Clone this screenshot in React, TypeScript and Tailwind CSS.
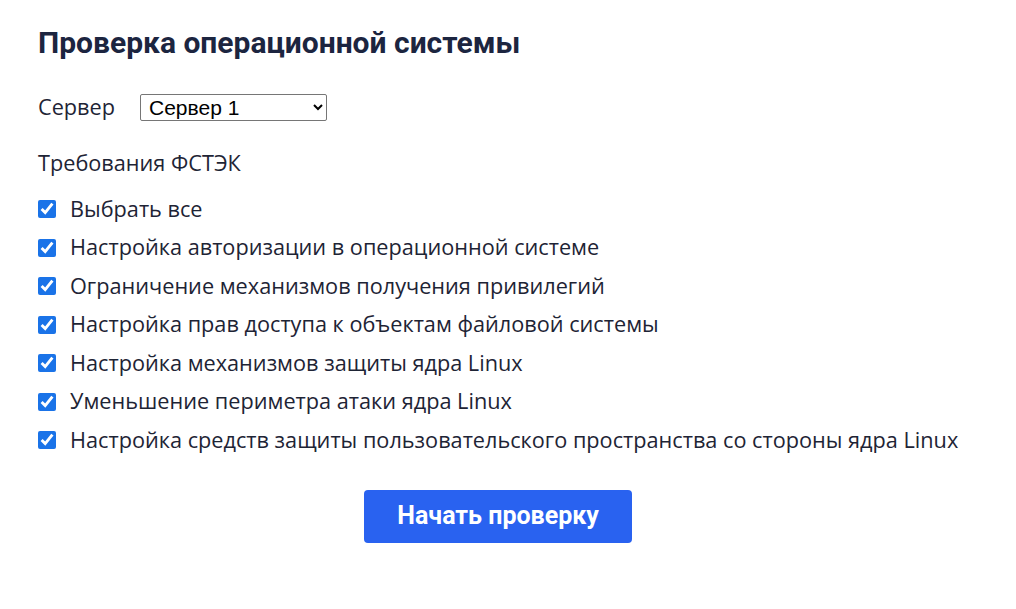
import React, { useState } from 'react';

const ITEMS = [
  'Настройка авторизации в операционной системе',
  'Ограничение механизмов получения привилегий',
  'Настройка прав доступа к объектам файловой системы',
  'Настройка механизмов защиты ядра Linux',
  'Уменьшение периметра атаки ядра Linux',
  'Настройка средств защиты пользовательского пространства со стороны ядра Linux',
];

export default function App() {
  const [checked, setChecked] = useState<boolean[]>(ITEMS.map(() => true));
  const [server, setServer] = useState('1');
  const all = checked.every(Boolean);

  const toggle = (i: number) => setChecked(c => c.map((v, j) => (j === i ? !v : v)));

  return (
    <div className="min-h-screen bg-white text-[#1e2435]" style={{ fontFamily: '"Open Sans", "Noto Sans", sans-serif' }}>
      <div className="w-fit pl-[38px] pr-[20px] pt-[25px]">
        <h1 className="text-[30px] font-bold leading-[36px] text-[#1c2540]" style={{ fontFamily: 'Roboto, "Noto Sans", sans-serif' }}>
          Проверка операционной системы
        </h1>

        <div className="mt-[30px] flex items-center gap-[25px] text-[21.7px] leading-[32px]">
          <label htmlFor="server">Сервер</label>
          <select
            id="server"
            value={server}
            onChange={e => setServer(e.target.value)}
            className="h-[27px] w-[187px] rounded-[2px] border border-[#767676] bg-white px-[4px] py-0 text-[21px] leading-[22px] text-black"
            style={{ fontFamily: '"Liberation Sans", Arial, sans-serif' }}
          >
            <option value="1">Сервер 1</option>
            <option value="2">Сервер 2</option>
          </select>
        </div>

        <div className="mt-[25px] text-[21.7px] leading-[30px]">Требования ФСТЭК</div>

        <div className="mt-[12px] flex flex-col">
          <label className="flex h-[38.5px] items-center gap-[14px] text-[21.7px]">
            <input
              type="checkbox"
              checked={all}
              onChange={() => setChecked(ITEMS.map(() => !all))}
              className="h-[18px] w-[18px] accent-[#1a73e8]"
            />
            <span>Выбрать все</span>
          </label>
          {ITEMS.map((item, i) => (
            <label key={item} className="flex h-[38.5px] items-center gap-[14px] text-[21.7px] whitespace-nowrap">
              <input
                type="checkbox"
                checked={checked[i]}
                onChange={() => toggle(i)}
                className="h-[18px] w-[18px] accent-[#1a73e8]"
              />
              <span>{item}</span>
            </label>
          ))}
        </div>

        <div className="mt-[30px] flex justify-center">
          <button
            className="h-[53px] w-[268px] rounded-[4px] bg-[#2962f0] text-[25px] font-bold text-white"
            style={{ fontFamily: 'Roboto, "Noto Sans", sans-serif' }}
          >
            Начать проверку
          </button>
        </div>
      </div>
    </div>
  );
}
